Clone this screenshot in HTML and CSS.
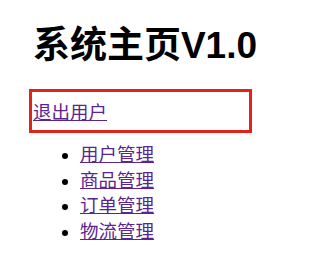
FILE: index.html
```html
<!DOCTYPE html>
<html lang="zh-CN">
<head>
<meta charset="utf-8">
<title>系统主页</title>
<link rel="stylesheet" href="styles.css">
</head>
<body>
<div class="page">
  <h1 class="title">系统主页V1.0</h1>
  <div class="logout">
    <a class="link" href="#">退出用户</a>
  </div>
  <ul class="menu">
    <li><a class="link" href="#">用户管理</a></li>
    <li><a class="link" href="#">商品管理</a></li>
    <li><a class="link" href="#">订单管理</a></li>
    <li><a class="link" href="#">物流管理</a></li>
  </ul>
</div>
</body>
</html>
```
FILE: styles.css
```css
html, body {
  margin: 0;
  padding: 0;
  background: #ffffff;
}
.page {
  width: 286px;
  font-family: "Liberation Sans", "Noto Sans CJK SC", sans-serif;
  color: #000000;
}
.title {
  margin: 0;
  padding-top: 26px;
  padding-left: 4px;
  font-size: 37px;
  line-height: 40px;
  font-weight: bold;
  text-align: center;
}
.logout {
  margin: 23px 0 0 29px;
  width: 216px;
  height: 38px;
  border: 3px solid #e0231c;
  display: flex;
  align-items: center;
  padding-left: 1px;
}
.link {
  color: #5a2590;
  font-size: 18.5px;
  text-decoration: underline;
}
.menu {
  margin: 9px 0 0 0;
  padding-left: 80px;
  list-style: disc;
}
.menu li {
  font-size: 18.5px;
  line-height: 25.7px;
}
```
